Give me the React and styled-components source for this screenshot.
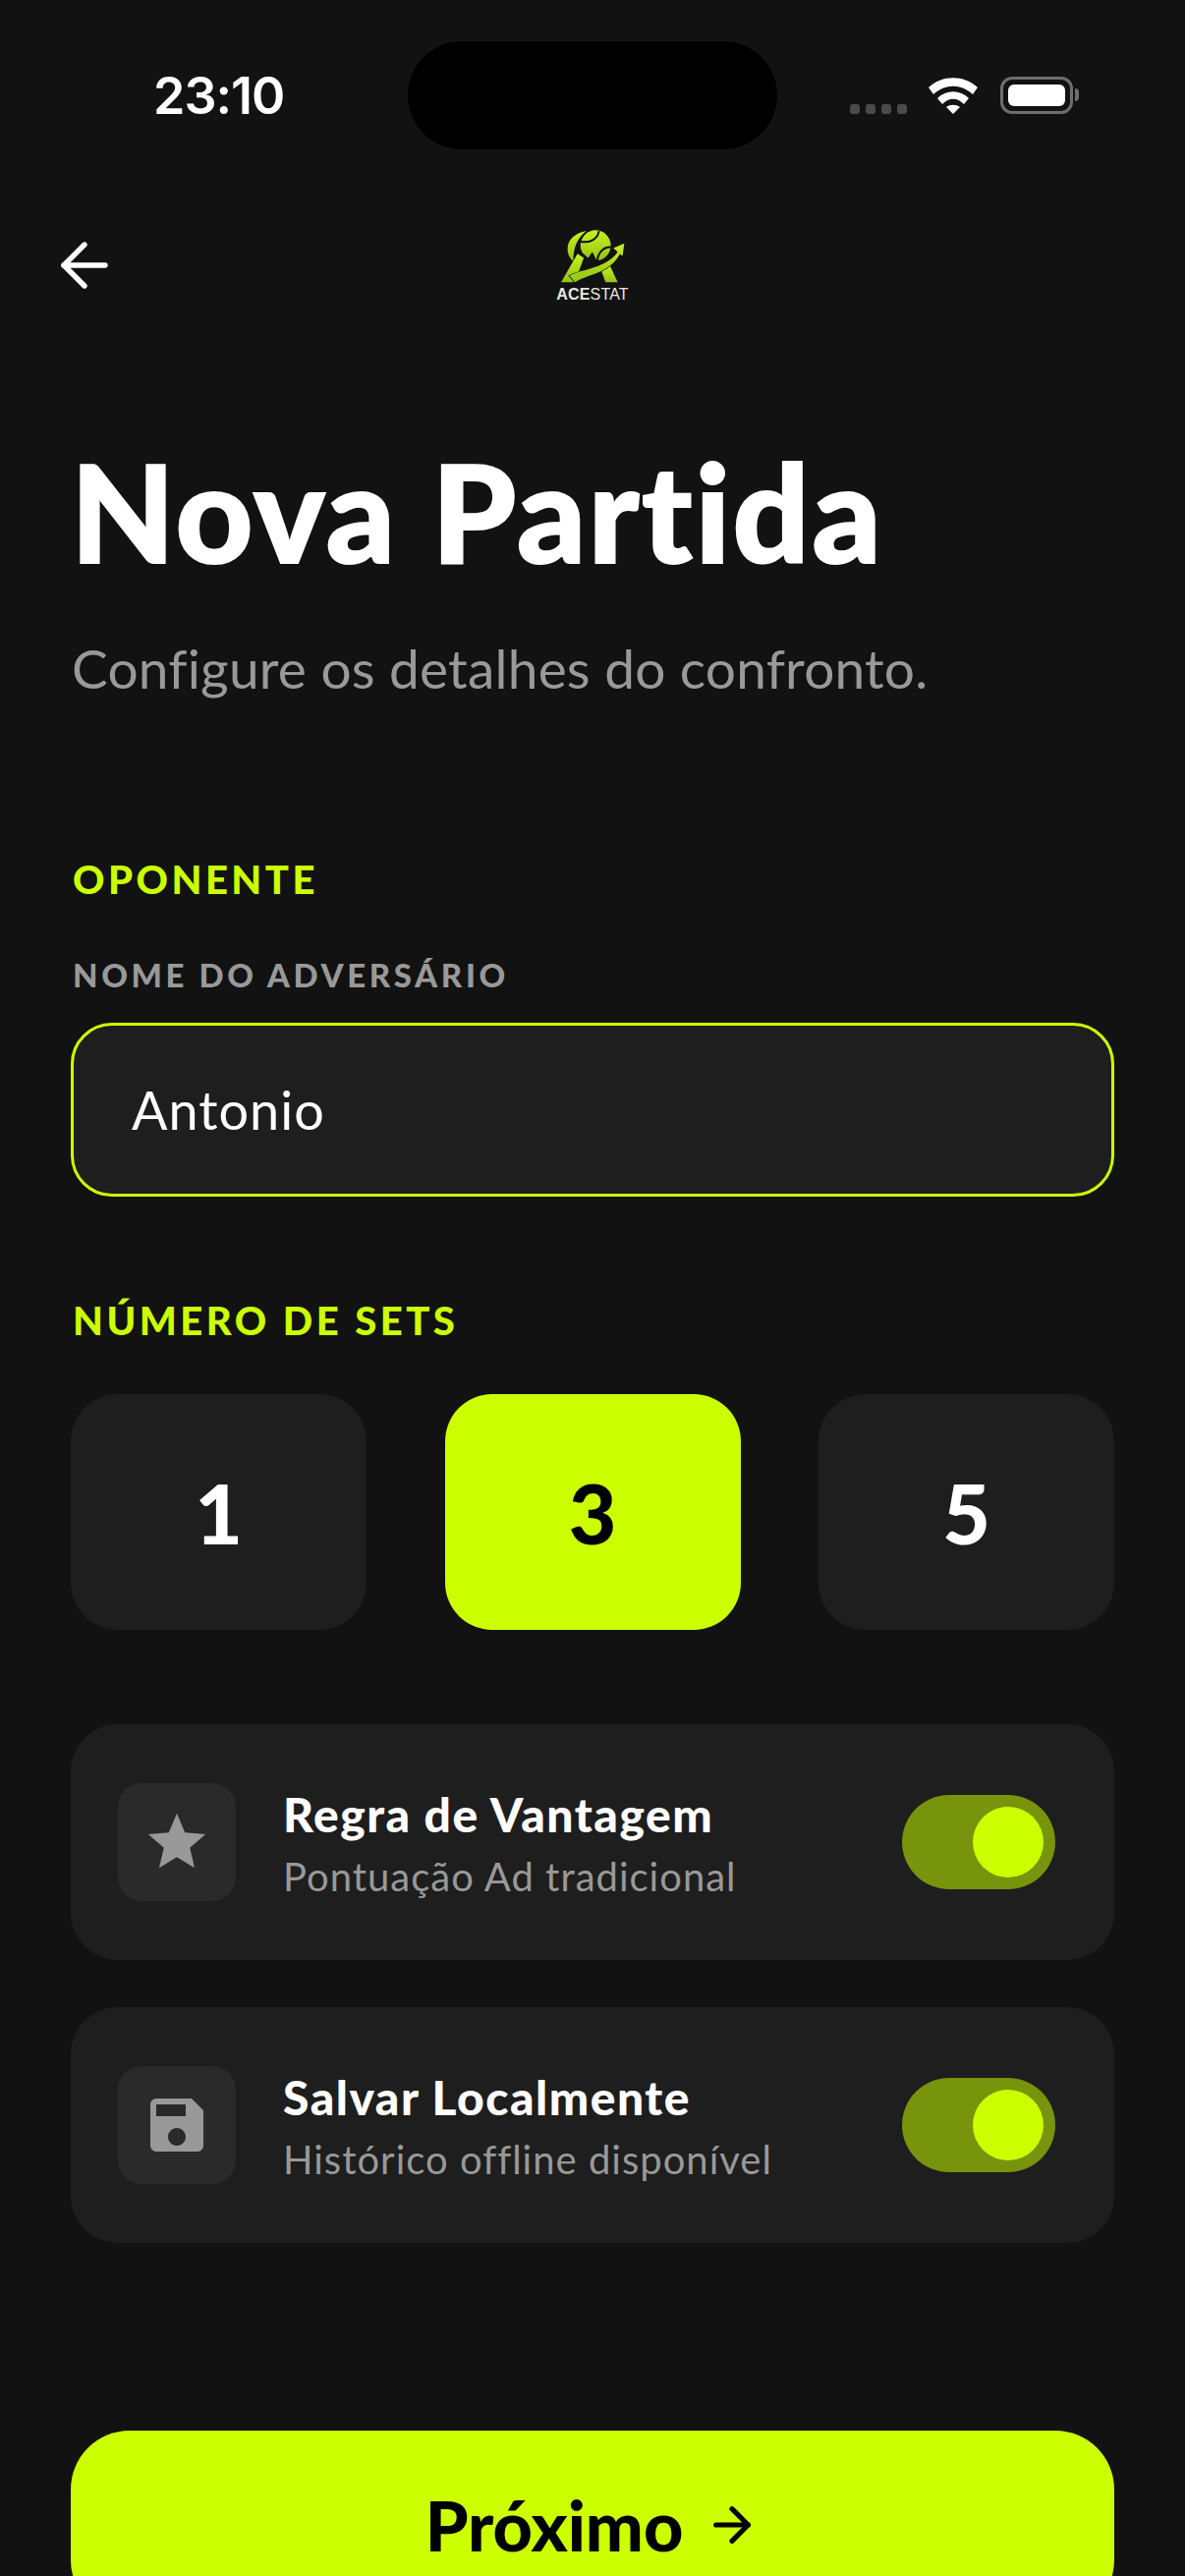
import React from "react";
import styled, { createGlobalStyle } from "styled-components";
import { ArrowLeft, ArrowRight } from "lucide-react";
import { MdStar, MdSave } from "react-icons/md";

const LIME = "#ccff00";

const GlobalStyle = createGlobalStyle`
  html, body {
    margin: 0;
    padding: 0;
    background: #121212;
  }
  * { box-sizing: border-box; }
`;

const Screen = styled.div`
  width: 1206px;
  height: 2622px;
  overflow: hidden;
  background: #121212;
  color: #fff;
  font-family: Lato, "Noto Sans", sans-serif;
`;

const StatusBar = styled.div`
  height: 152px;
  padding: 42px 0 0 156px;
  display: flex;
  align-items: flex-start;
`;

const Clock = styled.div`
  width: 259px;
  margin-top: 29px;
  font-family: Inter, sans-serif;
  font-size: 52px;
  line-height: 54px;
  font-weight: 600;
  letter-spacing: -1px;
`;

const Island = styled.div`
  width: 376px;
  height: 110px;
  border-radius: 55px;
  background: #000;
`;

const StatusIcons = styled.div`
  height: 38px;
  margin: 36px 0 0 74px;
  display: flex;
  align-items: flex-end;
`;

const Signal = styled.div`
  display: flex;
  gap: 6px;
  margin-right: 22px;
`;

const SignalDot = styled.span`
  width: 10px;
  height: 10px;
  border-radius: 3px;
  background: #4a4a4a;
`;

const Battery = styled.div`
  position: relative;
  width: 74px;
  height: 38px;
  margin-left: 23px;
  padding: 5px;
  border: 3px solid #6e6e6e;
  border-radius: 12px;

  &::before {
    content: "";
    display: block;
    height: 100%;
    border-radius: 6px;
    background: #fff;
  }

  &::after {
    content: "";
    position: absolute;
    right: -9px;
    top: 9px;
    width: 4px;
    height: 13px;
    border-radius: 0 4px 4px 0;
    background: #6e6e6e;
  }
`;

const Header = styled.header`
  height: 116px;
  margin-top: 60px;
  padding: 0 45px;
  display: flex;
  align-items: center;
  justify-content: space-between;
`;

const BackButton = styled.div`
  width: 91px;
  padding-left: 5px;
  display: flex;
`;

const Logo = styled.div`
  display: flex;
  flex-direction: column;
  align-items: center;
`;

const LogoText = styled.div`
  font-family: "Liberation Sans", sans-serif;
  font-size: 16px;
  line-height: 16px;
  margin-top: 2px;
  color: #e8e8dc;
  letter-spacing: 0.2px;

  b { font-weight: 700; }
`;

const Content = styled.main`
  padding: 0 72px;
`;

const Title = styled.h1`
  margin: 117px 0 0;
  font-size: 137px;
  line-height: 150px;
  font-weight: 900;
  letter-spacing: 2.6px;
  -webkit-text-stroke: 2px #fff;
`;

const Subtitle = styled.p`
  margin: 53px 0 0 1px;
  font-size: 55px;
  line-height: 64px;
  font-weight: 400;
  letter-spacing: 0.2px;
  color: #999;
`;

const SectionLabel = styled.div`
  margin: ${({ $top }) => $top}px 0 0 2px;
  color: ${LIME};
  font-size: 40px;
  line-height: 48px;
  font-weight: 900;
  letter-spacing: 3.5px;
`;

const FieldLabel = styled.div`
  margin: 53px 0 0 2px;
  color: #999;
  font-size: 33px;
  line-height: 40px;
  font-weight: 900;
  letter-spacing: 3.6px;
`;

const NameInput = styled.div`
  height: 177px;
  margin-top: 29px;
  padding: 0 59px;
  display: flex;
  align-items: center;
  background: #1e1e1e;
  border: 3px solid ${LIME};
  border-radius: 42px;
  font-size: 54px;
  letter-spacing: 1px;
`;

const SetRow = styled.div`
  margin-top: 51px;
  display: grid;
  grid-template-columns: repeat(3, 301px);
  justify-content: space-between;
`;

const SetButton = styled.div`
  height: 240px;
  display: flex;
  align-items: center;
  justify-content: center;
  border-radius: 48px;
  font-size: 84px;
  font-weight: 900;
  background: ${({ $active }) => ($active ? LIME : "#1e1e1e")};
  color: ${({ $active }) => ($active ? "#000" : "#fff")};
`;

const OptionList = styled.div`
  margin-top: 96px;
  display: flex;
  flex-direction: column;
  gap: 48px;
`;

const OptionCard = styled.div`
  height: 240px;
  padding: 0 60px 0 48px;
  display: flex;
  align-items: center;
  background: #1e1e1e;
  border-radius: 48px;
`;

const OptionIcon = styled.div`
  width: 120px;
  height: 120px;
  flex: none;
  display: flex;
  align-items: center;
  justify-content: center;
  background: #2a2a2a;
  border-radius: 24px;
  color: #999;
`;

const OptionText = styled.div`
  flex: 1;
  margin: 3px 0 0 48px;
`;

const OptionTitle = styled.div`
  font-size: 48px;
  line-height: 56px;
  font-weight: 900;
  letter-spacing: 1.5px;
`;

const OptionHint = styled.div`
  margin-top: 11px;
  font-size: 40px;
  line-height: 48px;
  letter-spacing: 1px;
  color: #999;
`;

const Toggle = styled.div`
  width: 156px;
  height: 96px;
  padding: 12px;
  display: flex;
  justify-content: flex-end;
  background: #78930c;
  border-radius: 48px;

  &::after {
    content: "";
    width: 72px;
    height: 72px;
    border-radius: 50%;
    background: ${LIME};
  }
`;

const NextButton = styled.div`
  height: 192px;
  margin-top: 191px;
  display: flex;
  align-items: center;
  justify-content: center;
  gap: 22px;
  background: ${LIME};
  border-radius: 60px;
  color: #000;
  font-size: 70px;
  font-weight: 900;
`;

function WifiIcon() {
  return (
    <svg width="50" height="37" viewBox="0 0 50 37" fill="#fff">
      <path d="M0 10C14-3 36-3 50 10L45 17C33 6 17 6 5 17Z" />
      <path d="M9 21C18 12 32 12 41 21L36 27C29 20 21 20 14 27Z" />
      <path d="M18 30C22 27 28 27 32 30L25 37Z" />
    </svg>
  );
}

function AcestatMark() {
  return (
    <svg width="67" height="57" viewBox="160 70 200 170">
      <defs>
        <linearGradient id="lime" x1="0" y1="0" x2="0" y2="1">
          <stop offset="0" stopColor="#c8f020" />
          <stop offset="1" stopColor="#93c414" />
        </linearGradient>
      </defs>
      <path fill="url(#lime)" d="M240 76C205 82 180 105 183 135C184 150 192 162 200 168C200 130 210 100 240 76Z" />
      <circle cx="268" cy="120" r="46" fill="url(#lime)" />
      <path fill="none" stroke="#121212" strokeWidth="6" d="M278 76C275 100 250 115 220 108" />
      <path fill="none" stroke="#121212" strokeWidth="6" d="M318 126C295 122 275 140 273 168" />
      <path fill="#121212" d="M205 155L225 140L245 158L258 140L272 168L290 178L300 182L200 215Z" />
      <path fill="url(#lime)" d="M213 145L232 158L205 232H163Z" />
      <path fill="url(#lime)" d="M285 195L310 178L335 232H298Z" />
      <path
        fill="url(#lime)"
        stroke="#121212"
        strokeWidth="4"
        paintOrder="stroke"
        d="M188 212C230 190 300 190 335 140L322 128L355 114L350 152L342 146C310 205 250 205 205 232Z"
      />
    </svg>
  );
}

export default function App() {
  return (
    <Screen>
      <GlobalStyle />
      <StatusBar>
        <Clock>23:10</Clock>
        <Island />
        <StatusIcons>
          <Signal>
            <SignalDot />
            <SignalDot />
            <SignalDot />
            <SignalDot />
          </Signal>
          <WifiIcon />
          <Battery />
        </StatusIcons>
      </StatusBar>

      <Header>
        <BackButton>
          <ArrowLeft size={72} strokeWidth={1.8} color="#fff" />
        </BackButton>
        <Logo>
          <AcestatMark />
          <LogoText><b>ACE</b>STAT</LogoText>
        </Logo>
        <BackButton />
      </Header>

      <Content>
        <Title>Nova Partida</Title>
        <Subtitle>Configure os detalhes do confronto.</Subtitle>

        <SectionLabel $top={159}>OPONENTE</SectionLabel>
        <FieldLabel>NOME DO ADVERSÁRIO</FieldLabel>
        <NameInput>Antonio</NameInput>

        <SectionLabel $top={102}>NÚMERO DE SETS</SectionLabel>
        <SetRow>
          <SetButton>1</SetButton>
          <SetButton $active>3</SetButton>
          <SetButton>5</SetButton>
        </SetRow>

        <OptionList>
          <OptionCard>
            <OptionIcon><MdStar size={70} /></OptionIcon>
            <OptionText>
              <OptionTitle>Regra de Vantagem</OptionTitle>
              <OptionHint>Pontuação Ad tradicional</OptionHint>
            </OptionText>
            <Toggle />
          </OptionCard>
          <OptionCard>
            <OptionIcon><MdSave size={72} /></OptionIcon>
            <OptionText>
              <OptionTitle>Salvar Localmente</OptionTitle>
              <OptionHint>Histórico offline disponível</OptionHint>
            </OptionText>
            <Toggle />
          </OptionCard>
        </OptionList>

        <NextButton>
          Próximo
          <ArrowRight size={56} strokeWidth={2.2} />
        </NextButton>
      </Content>
    </Screen>
  );
}
